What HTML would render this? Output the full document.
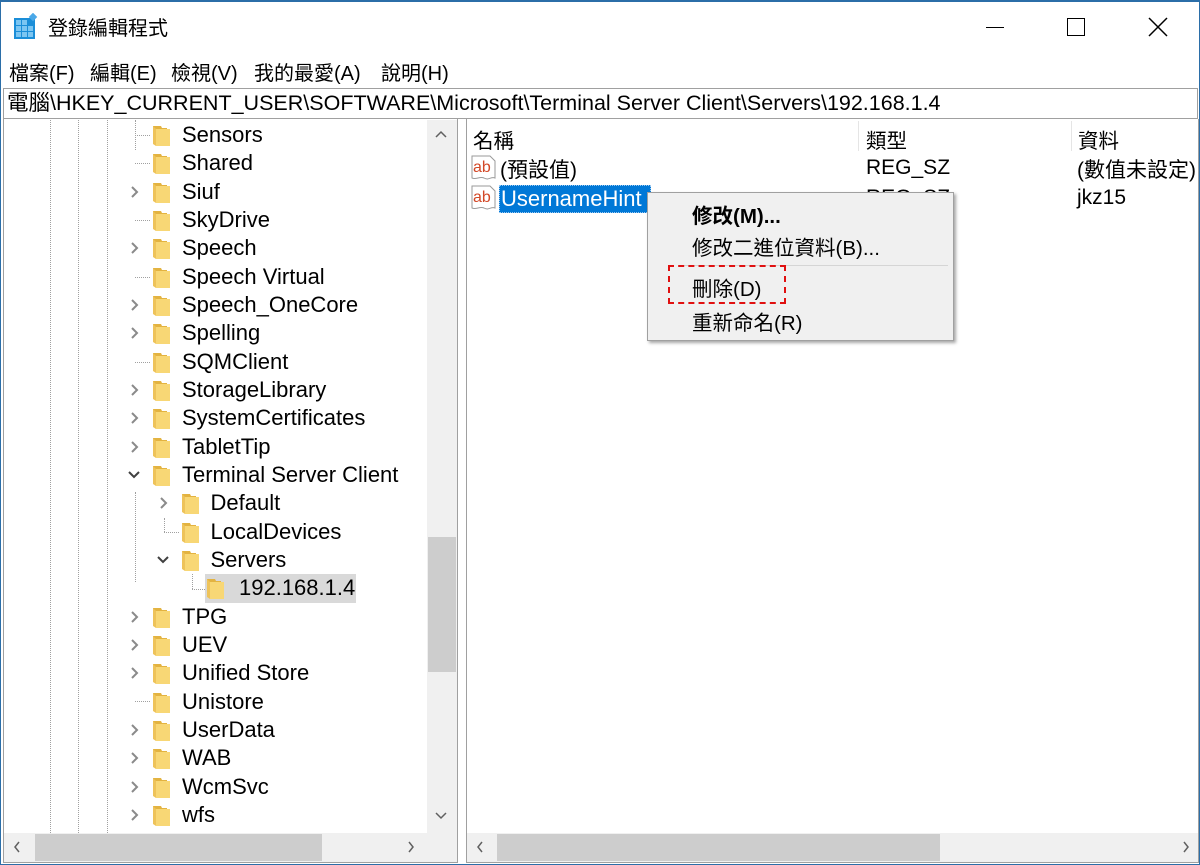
<!DOCTYPE html>
<html><head><meta charset="utf-8">
<style>
*{margin:0;padding:0;box-sizing:border-box}
body{width:1200px;height:865px;overflow:hidden;background:#fff;font-family:"Segoe UI","Liberation Sans","Noto Sans CJK TC",sans-serif;color:#000;position:relative}
.a{position:absolute}
.win{position:absolute;left:0;top:0;width:1200px;height:865px;border:1px solid #2b6ea8;border-top:2px solid #2b6ea8}
.title{left:48px;top:12px;font-size:20px;font-family:"Liberation Sans","Noto Sans CJK TC",sans-serif;color:#000}
.menu{top:57px;font-size:20px;font-family:"Liberation Sans","Noto Sans CJK TC",sans-serif}
.addr{left:3px;top:88px;width:1195px;height:31px;border:1px solid #a0a0a0;font-size:21.5px;line-height:29px;padding-left:3px;font-family:"Liberation Sans","Noto Sans CJK TC",sans-serif;white-space:nowrap;overflow:hidden}
.r{position:absolute;height:28px;font-size:22px;line-height:28px;white-space:nowrap;font-family:"Liberation Sans",sans-serif}
.dv{position:absolute;border-left:1px dotted #a0a0a0}
.dh{position:absolute;border-top:1px dotted #a0a0a0;height:0}
.cjk{font-family:"Liberation Sans","Noto Sans CJK TC",sans-serif}
</style></head><body>
<div class="win"></div>
<svg class="a" style="left:13px;top:13px" width="27" height="27" viewBox="0 0 27 27">
<rect x="1" y="5" width="21" height="21" fill="#1b8ed8"/>
<g fill="#7cc6f2"><rect x="3" y="7" width="5" height="5"/><rect x="9" y="7" width="5" height="5"/><rect x="3" y="13" width="5" height="5"/><rect x="9" y="13" width="5" height="5"/><rect x="15" y="13" width="5" height="5"/><rect x="3" y="19" width="5" height="5"/><rect x="9" y="19" width="5" height="5"/><rect x="15" y="19" width="5" height="5"/></g>
<rect x="17" y="1" width="6" height="6" transform="rotate(45 20 4)" fill="#4aa8e8"/>
</svg>
<div class="a title">登錄編輯程式</div>
<div class="a" style="left:986px;top:27px;width:18px;height:1px;background:#000"></div>
<div class="a" style="left:1067px;top:18px;width:18px;height:18px;border:1.5px solid #000"></div>
<svg class="a" style="left:1148px;top:17px" width="20" height="20"><path d="M1 1L19 19M19 1L1 19" stroke="#000" stroke-width="1.5"/></svg>
<div class="a menu" style="left:9px">檔案(F)</div>
<div class="a menu" style="left:90px">編輯(E)</div>
<div class="a menu" style="left:171px">檢視(V)</div>
<div class="a menu" style="left:254px">我的最愛(A)</div>
<div class="a menu" style="left:381px">說明(H)</div>
<div class="a addr">電腦\HKEY_CURRENT_USER\SOFTWARE\Microsoft\Terminal Server Client\Servers\192.168.1.4</div>
<div class="a" style="left:3px;top:119px;width:455px;height:744px;border:1px solid #a0a0a0;border-top:none"></div>
<div class="a" style="left:427px;top:120px;width:30px;height:713px;background:#f0f0f0"></div>
<div class="a" style="left:428px;top:537px;width:28px;height:135px;background:#cdcdcd"></div>
<svg class="a" style="left:434px;top:129px" width="14" height="10"><path d="M2 8L7 3L12 8" stroke="#606060" stroke-width="1.5" fill="none"/></svg>
<svg class="a" style="left:434px;top:811px" width="14" height="10"><path d="M2 2L7 7L12 2" stroke="#606060" stroke-width="1.5" fill="none"/></svg>
<div class="a" style="left:4px;top:833px;width:453px;height:29px;background:#f0f0f0"></div>
<div class="a" style="left:35px;top:834px;width:287px;height:27px;background:#cdcdcd"></div>
<svg class="a" style="left:12px;top:840px" width="10" height="14"><path d="M7 2L3 7L7 12" stroke="#606060" stroke-width="1.5" fill="none"/></svg>
<svg class="a" style="left:406px;top:840px" width="10" height="14"><path d="M3 2L7 7L3 12" stroke="#606060" stroke-width="1.5" fill="none"/></svg>
<div class="dv" style="left:50px;top:120px;height:713px"></div>
<div class="dv" style="left:78px;top:120px;height:713px"></div>
<div class="dv" style="left:107px;top:120px;height:713px"></div>
<div class="dv" style="left:135px;top:120px;height:30px"></div>
<div class="dh" style="left:135px;top:135px;width:15px"></div>
<div class="dh" style="left:135px;top:163px;width:15px"></div>
<div class="dh" style="left:135px;top:220px;width:15px"></div>
<div class="dh" style="left:135px;top:277px;width:15px"></div>
<div class="dh" style="left:135px;top:362px;width:15px"></div>
<div class="dh" style="left:135px;top:701px;width:15px"></div>
<div class="dv" style="left:135px;top:492px;height:90px"></div>
<div class="dv" style="left:164px;top:518px;height:14px"></div>
<div class="dh" style="left:164px;top:532px;width:15px"></div>
<div class="dv" style="left:192px;top:574px;height:15px"></div>
<div class="dh" style="left:192px;top:589px;width:13px"></div>
<div class="a" style="left:205px;top:574px;width:151px;height:29px;background:#d9d9d9"></div>
<svg width="0" height="0" style="position:absolute"><defs>
<symbol id="f" viewBox="0 0 18 20"><path d="M0 0H8L9 2H14V18H2Z" fill="#e3b341"/><path d="M3 3H17V20H3Z" fill="#f8d775"/><path d="M3 3V20L0 18V0Z" fill="#eec35a"/></symbol>
<symbol id="cr" viewBox="0 0 12 14"><path d="M3 2L8 7L3 12" stroke="#8a8a8a" stroke-width="2" fill="none"/></symbol>
<symbol id="cd" viewBox="0 0 14 12"><path d="M2 3L7 8L12 3" stroke="#404040" stroke-width="2" fill="none"/></symbol>
</defs></svg>
<div id="tree"></div>
<div class="a" style="left:466px;top:119px;width:733px;height:744px;border:1px solid #a0a0a0;border-top:none"></div>
<div class="a" style="left:858px;top:121px;width:1px;height:30px;background:#e5e5e5"></div>
<div class="a" style="left:1071px;top:121px;width:1px;height:30px;background:#e5e5e5"></div>
<div class="a cjk" style="left:473px;top:124px;font-size:20.5px">名稱</div>
<div class="a cjk" style="left:866px;top:124px;font-size:20.5px">類型</div>
<div class="a cjk" style="left:1078px;top:124px;font-size:20.5px">資料</div>
<svg width="0" height="0" style="position:absolute"><defs>
<symbol id="ab" viewBox="0 0 26 26"><path d="M1 1H19L24 6V23C20 21 18 26 13 23C9 21 5 25 1 23Z" fill="#fff" stroke="#9a9a9a"/><text x="2" y="17" font-size="16" font-family="Liberation Sans" fill="#d24726">ab</text></symbol>
</defs></svg>
<svg class="a" style="left:471px;top:155px" width="26" height="26"><use href="#ab"/></svg>
<svg class="a" style="left:471px;top:185px" width="26" height="26"><use href="#ab"/></svg>
<div class="a cjk" style="left:500px;top:154px;font-size:21px">(預設值)</div>
<div class="a" style="left:499px;top:185px;width:152px;height:28px;background:#0078d7;border:1px dotted #9ac8f0"></div>
<div class="a" style="left:501px;top:185px;font-size:22px;color:#fff;font-family:'Liberation Sans',sans-serif;line-height:28px">UsernameHint</div>
<div class="a" style="left:866px;top:156px;font-size:21px;font-family:'Liberation Sans',sans-serif">REG_SZ</div>
<div class="a" style="left:866px;top:186px;font-size:21px;font-family:'Liberation Sans',sans-serif">REG_SZ</div>
<div class="a cjk" style="left:1077px;top:154px;font-size:21px">(數值未設定)</div>
<div class="a" style="left:1077px;top:186px;font-size:21px;font-family:'Liberation Sans',sans-serif">jkz15</div>
<div class="a" style="left:467px;top:833px;width:731px;height:29px;background:#f0f0f0"></div>
<div class="a" style="left:497px;top:834px;width:443px;height:27px;background:#cdcdcd"></div>
<svg class="a" style="left:475px;top:840px" width="10" height="14"><path d="M7 2L3 7L7 12" stroke="#606060" stroke-width="1.5" fill="none"/></svg>
<svg class="a" style="left:1181px;top:840px" width="10" height="14"><path d="M3 2L7 7L3 12" stroke="#606060" stroke-width="1.5" fill="none"/></svg>
<div class="a" style="left:647px;top:192px;width:307px;height:149px;background:#f0f0f0;border:1px solid #a0a0a0;box-shadow:2px 2px 3px rgba(0,0,0,.35)"></div>
<div class="a cjk" style="left:692px;top:199px;font-size:20.5px;font-weight:bold">修改(M)...</div>
<div class="a cjk" style="left:692px;top:231px;font-size:20.5px">修改二進位資料(B)...</div>
<div class="a" style="left:682px;top:265px;width:266px;height:1px;background:#d5d5d5"></div>
<div class="a cjk" style="left:692px;top:272px;font-size:20.5px">刪除(D)</div>
<div class="a cjk" style="left:692px;top:306px;font-size:20.5px">重新命名(R)</div>
<div class="a" style="left:668px;top:265px;width:118px;height:39px;border:2px dashed #e01010"></div>
<script>
var rows=[["Sensors",1,0],["Shared",1,0],["Siuf",1,1],["SkyDrive",1,0],["Speech",1,1],["Speech Virtual",1,0],["Speech_OneCore",1,1],["Spelling",1,1],["SQMClient",1,0],["StorageLibrary",1,1],["SystemCertificates",1,1],["TabletTip",1,1],["Terminal Server Client",1,2],["Default",2,1],["LocalDevices",2,0],["Servers",2,2],["192.168.1.4",3,0],["TPG",1,1],["UEV",1,1],["Unified Store",1,1],["Unistore",1,0],["UserData",1,1],["WAB",1,1],["WcmSvc",1,1],["wfs",1,1]];
var h="";
rows.forEach(function(r,i){var top=Math.round(121+28.33*i);var off=(r[1]-1)*28.5;
if(r[2]==1)h+='<svg class="a" style="left:'+(129+off)+'px;top:'+(top+7)+'px" width="12" height="14"><use href="#cr"/></svg>';
if(r[2]==2)h+='<svg class="a" style="left:'+(127+off)+'px;top:'+(top+8)+'px" width="14" height="12"><use href="#cd"/></svg>';
var fx=r[1]==3?207:153+off;var tx=r[1]==3?239:182+off;
h+='<svg class="a" style="left:'+fx+'px;top:'+(top+5)+'px" width="18" height="20"><use href="#f"/></svg>';
h+='<div class="r" style="left:'+tx+'px;top:'+top+'px">'+r[0]+'</div>';});
document.getElementById("tree").innerHTML=h;
</script>
</body></html>
